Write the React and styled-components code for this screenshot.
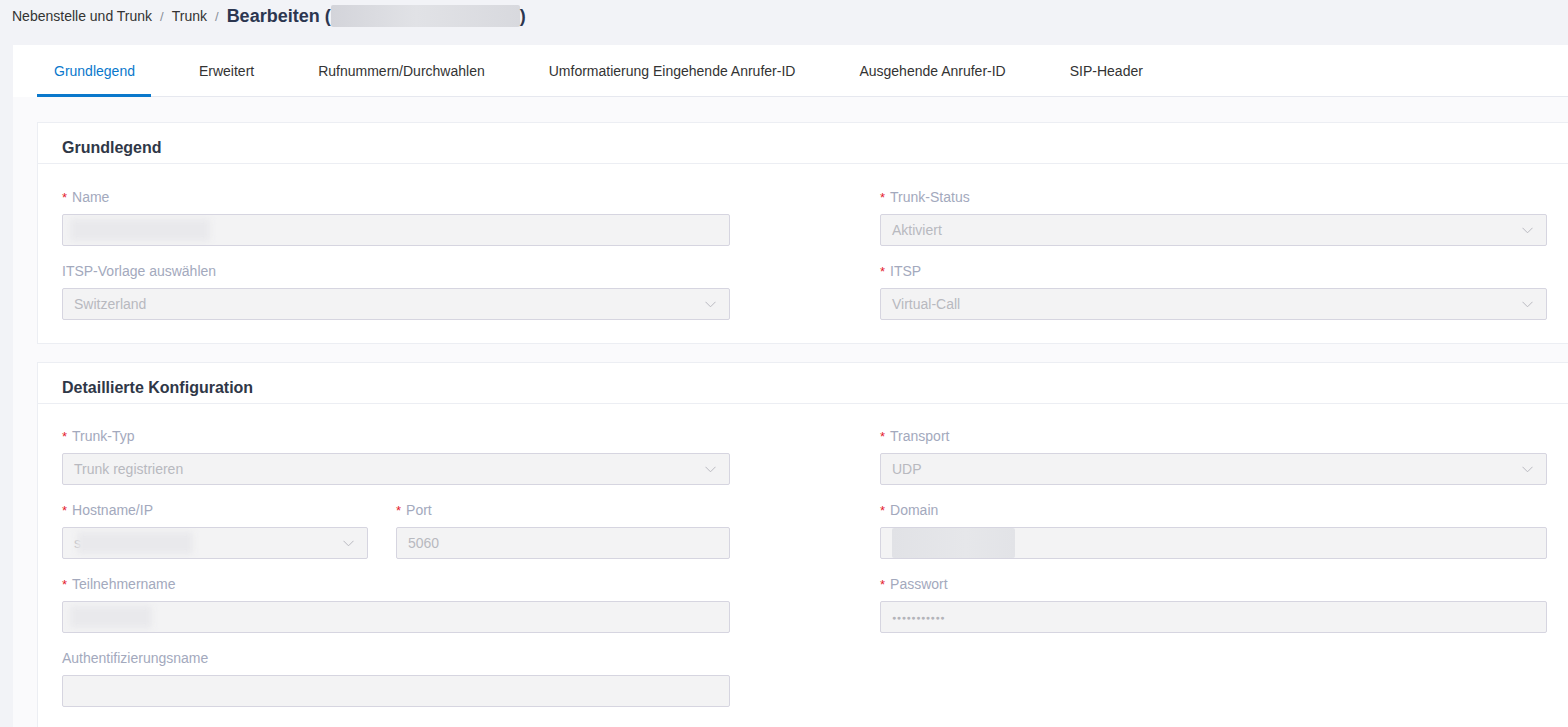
import React from "react";
import styled, { createGlobalStyle } from "styled-components";

const Global = createGlobalStyle`
  html, body { margin: 0; padding: 0; overflow: hidden; }
  body {
    background: #f2f3f7;
    font-family: "Liberation Sans", Arial, sans-serif;
    color: #333;
  }
  * { box-sizing: border-box; }
`;

const Page = styled.div`
  width: 1640px;
`;

const Crumbs = styled.div`
  height: 32px;
  margin-bottom: 13px;
  padding-left: 12px;
  display: flex;
  align-items: center;
  font-size: 14px;
  color: #333;
`;

const Sep = styled.span`
  color: #8a8f99;
  margin: 0 8px;
  font-size: 13px;
`;

const Current = styled.span`
  display: flex;
  align-items: center;
  font-size: 18px;
  font-weight: bold;
  color: #2c3650;
`;

const BlurBox = styled.span`
  display: inline-block;
  width: ${(p) => p.$w}px;
  height: ${(p) => p.$h}px;
  background: linear-gradient(90deg, #d3d4da 0%, #e1e2e6 45%, #d8d9de 100%);
  border-radius: 2px;
`;

const Panel = styled.div`
  margin-left: 13px;
  background: #ffffff;
`;

const TabNav = styled.div`
  margin: 0 24px;
  height: 52px;
  display: flex;
  gap: 31px;
  border-bottom: 1px solid #e6e8ef;
`;

const Tab = styled.div`
  padding: 0 16px 0 17px;
  display: flex;
  align-items: center;
  font-size: 14px;
  color: ${(p) => (p.$active ? "#0a78cc" : "#333")};
  border-bottom: 3px solid ${(p) => (p.$active ? "#0a78cc" : "transparent")};
  margin-bottom: -1px;
  padding-top: 3px;
`;

const Content = styled.div`
  background: #fafafc;
  padding: 25px 0 0 24px;
  display: flex;
  flex-direction: column;
  gap: 18px;
`;

const Card = styled.section`
  background: #fff;
  border: 1px solid #eceef3;
`;

const CardHead = styled.div`
  height: 41px;
  padding: 9px 0 0 24px;
  display: flex;
  align-items: center;
  border-bottom: 1px solid #eceef3;
  font-size: 16px;
  font-weight: bold;
  color: #2f3747;
`;

const CardBody = styled.div`
  padding: ${(p) => p.$top}px 24px ${(p) => p.$bottom}px 24px;
  display: grid;
  grid-template-columns: 668px 667px;
  column-gap: 150px;
  row-gap: 15px;
  align-items: start;
`;

const Split = styled.div`
  display: grid;
  grid-template-columns: 306px 334px;
  column-gap: 28px;
`;

const Field = styled.div`
  display: flex;
  flex-direction: column;
`;

const Label = styled.div`
  height: 20px;
  line-height: 20px;
  margin-bottom: 7px;
  font-size: 14px;
  color: #a3a9bd;
  display: flex;
  align-items: center;
`;

const Star = styled.span`
  color: #e4202c;
  font-size: 13px;
  margin-right: 5px;
  margin-top: 2px;
`;

const Input = styled.div`
  height: 32px;
  background: #f3f3f4;
  border: 1px solid #d6d5e0;
  border-radius: 2px;
  padding: 0 13px 0 11px;
  display: flex;
  align-items: center;
  justify-content: space-between;
  font-size: 14px;
  color: #b8b9bf;
  overflow: hidden;
`;

const Value = styled.span`
  display: flex;
  align-items: center;
`;

const Smudge = styled.span`
  display: inline-block;
  width: ${(p) => p.$w}px;
  height: ${(p) => p.$h || 22}px;
  margin-left: ${(p) => p.$ml || 0}px;
  background: ${(p) => p.$bg || "#e9e9ec"};
  filter: blur(${(p) => (p.$sharp ? 0 : 3)}px);
  border-radius: 2px;
`;

const Dots = styled.span`
  font-size: 7px;
  letter-spacing: 0.6px;
  color: #b3b4ba;
`;

const Chevron = () => (
  <svg width="11" height="7" viewBox="0 0 11 7" fill="none">
    <path d="M0.5 0.8 L5.5 5.8 L10.5 0.8" stroke="#b9b9c0" strokeWidth="1" />
  </svg>
);

const FormField = ({ label, required, select, children }) => (
  <Field>
    <Label>
      {required && <Star>*</Star>}
      {label}
    </Label>
    <Input>
      <Value>{children}</Value>
      {select && <Chevron />}
    </Input>
  </Field>
);

const tabs = [
  "Grundlegend",
  "Erweitert",
  "Rufnummern/Durchwahlen",
  "Umformatierung Eingehende Anrufer-ID",
  "Ausgehende Anrufer-ID",
  "SIP-Header",
];

export default function App() {
  return (
    <Page>
      <Global />
      <Crumbs>
        <span>Nebenstelle und Trunk</span>
        <Sep>/</Sep>
        <span>Trunk</span>
        <Sep>/</Sep>
        <Current>
          Bearbeiten (<BlurBox $w={189} $h={22} />)
        </Current>
      </Crumbs>
      <Panel>
        <TabNav>
          {tabs.map((t, i) => (
            <Tab key={t} $active={i === 0}>
              {t}
            </Tab>
          ))}
        </TabNav>
        <Content>
          <Card>
            <CardHead>Grundlegend</CardHead>
            <CardBody $top={23} $bottom={23}>
              <FormField label="Name" required>
                <Smudge $w={140} $ml={-4} />
              </FormField>
              <FormField label="Trunk-Status" required select>
                Aktiviert
              </FormField>
              <FormField label="ITSP-Vorlage auswählen" select>
                Switzerland
              </FormField>
              <FormField label="ITSP" required select>
                Virtual-Call
              </FormField>
            </CardBody>
          </Card>
          <Card>
            <CardHead>Detaillierte Konfiguration</CardHead>
            <CardBody $top={22} $bottom={24}>
              <FormField label="Trunk-Typ" required select>
                Trunk registrieren
              </FormField>
              <FormField label="Transport" required select>
                UDP
              </FormField>
              <Split>
                <FormField label="Hostname/IP" required select>
                  s<Smudge $w={116} $ml={-4} />
                </FormField>
                <FormField label="Port" required>
                  5060
                </FormField>
              </Split>
              <FormField label="Domain" required>
                <Smudge $w={123} $h={30} $ml={0} $bg="linear-gradient(90deg,#e1e2e6,#e6e7ea 60%,#e2e3e7)" $sharp />
              </FormField>
              <FormField label="Teilnehmername" required>
                <Smudge $w={82} $ml={-4} />
              </FormField>
              <FormField label="Passwort" required>
                <Dots>●●●●●●●●●●●</Dots>
              </FormField>
              <FormField label="Authentifizierungsname" />
            </CardBody>
          </Card>
        </Content>
      </Panel>
    </Page>
  );
}
